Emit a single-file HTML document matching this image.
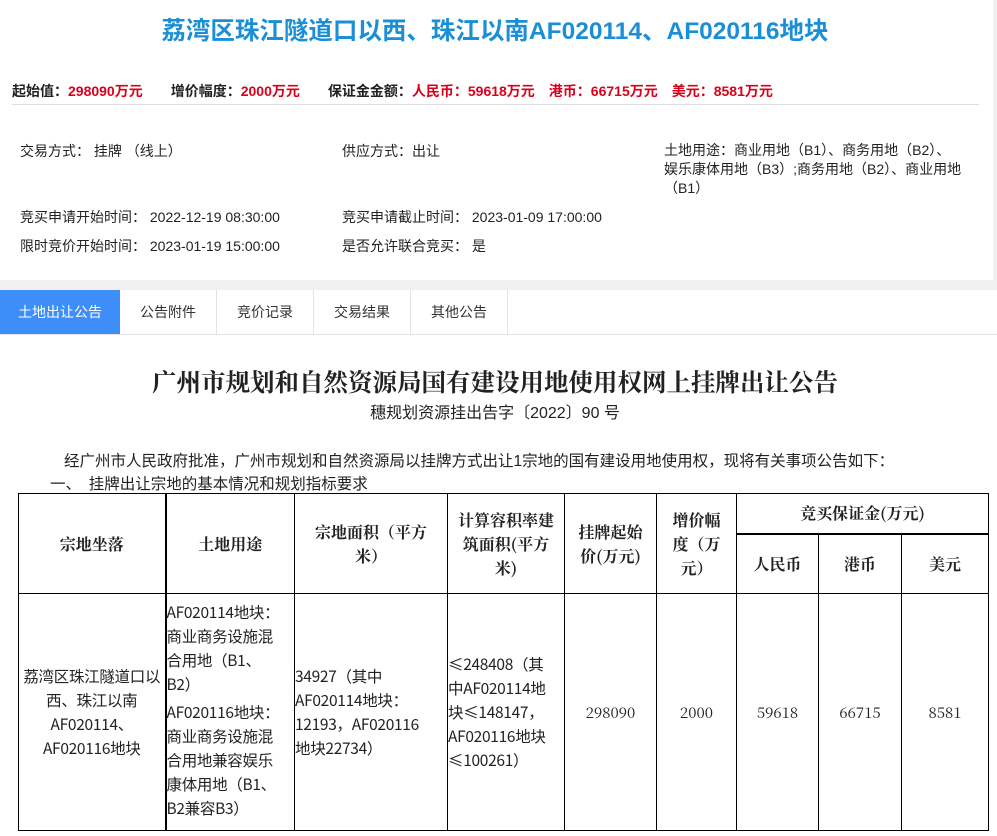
<!DOCTYPE html>
<html><head><meta charset="utf-8"><style>
*{margin:0;padding:0;box-sizing:border-box}
body{width:997px;height:836px;overflow:hidden;background:#fff;font-family:"Liberation Sans","Noto Sans CJK SC",sans-serif;color:#222;position:relative}
.a{position:absolute;white-space:nowrap}
h1{position:absolute;left:0;width:990px;top:12px;text-align:center;font-size:24.5px;color:#1a8fd6;font-weight:bold}
.red{color:#d9001b}
.b{font-weight:bold;font-size:14px}
.s{font-size:14px;color:#222}
.tab{position:absolute;top:290px;height:44px;line-height:44px;text-align:center;font-size:14px;border-right:1px solid #e4e4e8;color:#333}
table{position:absolute;left:18px;top:493px;border-collapse:collapse;font-family:"Noto Serif CJK SC","Noto Sans CJK SC",serif}
td{border:1px solid #000;text-align:center;font-size:15px;vertical-align:middle}
th{border:1px solid #000;font-size:16px;font-weight:bold;text-align:center;line-height:24px}
.l{text-align:left;font-size:15.5px;line-height:24px;font-family:"Noto Sans CJK SC",sans-serif;letter-spacing:-0.3px}
</style></head><body>
<h1>荔湾区珠江隧道口以西、珠江以南AF020114、AF020116地块</h1>
<div class="a b" style="left:12px;top:81px">起始值：<span class="red">298090万元</span>　　增价幅度：<span class="red">2000万元</span>　　保证金金额：<span class="red">人民币：59618万元　港币：66715万元　美元：8581万元</span></div>
<div class="a" style="left:12px;top:104px;width:967px;height:1px;background:#ddd"></div>
<div class="a s" style="left:20px;top:141px">交易方式：&nbsp;挂牌 （线上）</div>
<div class="a s" style="left:342px;top:141px">供应方式：出让</div>
<div class="a s" style="left:664px;top:141px;line-height:19px">土地用途：商业用地（B1）、商务用地（B2）、<br>娱乐康体用地（B3）;商务用地（B2）、商业用地<br>（B1）</div>
<div class="a s" style="left:20px;top:207px">竞买申请开始时间：&nbsp;2022-12-19 08:30:00</div>
<div class="a s" style="left:342px;top:207px">竞买申请截止时间：&nbsp;2023-01-09 17:00:00</div>
<div class="a s" style="left:20px;top:236px">限时竞价开始时间：&nbsp;2023-01-19 15:00:00</div>
<div class="a s" style="left:342px;top:236px">是否允许联合竞买：&nbsp;是</div>
<div class="a" style="left:0;top:280px;width:997px;height:10px;background:#f0f0f0"></div>
<div class="a" style="left:993px;top:0;width:4px;height:290px;background:#f0f0f0"></div>
<div class="a" style="left:0;top:334px;width:997px;height:1px;background:#e4e4e8"></div>
<div class="tab" style="left:0;width:120px;background:#3d8ef8;color:#fff;border:none">土地出让公告</div>
<div class="tab" style="left:120px;width:97px">公告附件</div>
<div class="tab" style="left:217px;width:97px">竞价记录</div>
<div class="tab" style="left:314px;width:97px">交易结果</div>
<div class="tab" style="left:411px;width:97px">其他公告</div>
<div class="a" style="left:0;width:990px;top:364px;text-align:center;font-size:24.5px;font-weight:bold;font-family:'Noto Serif CJK SC',serif">广州市规划和自然资源局国有建设用地使用权网上挂牌出让公告</div>
<div class="a" style="left:0;width:990px;top:399px;text-align:center;font-size:16px">穗规划资源挂出告字〔2022〕90 号</div>
<div class="a" style="left:64px;top:449px;font-size:15.5px">经广州市人民政府批准，广州市规划和自然资源局以挂牌方式出让1宗地的国有建设用地使用权，现将有关事项公告如下：</div>
<div class="a" style="left:50px;top:472px;font-size:15.5px">一、　挂牌出让宗地的基本情况和规划指标要求</div>
<table>
<tr style="height:40px"><th rowspan="2" style="width:147px;border-right:2px solid #000">宗地坐落</th><th rowspan="2" style="width:129px">土地用途</th><th rowspan="2" style="width:153px">宗地面积（平方<br>米）</th><th rowspan="2" style="width:117px">计算容积率建<br>筑面积(平方<br>米)</th><th rowspan="2" style="width:92px">挂牌起始<br>价(万元)</th><th rowspan="2" style="width:80px">增价幅<br>度（万<br>元）</th><th colspan="3" style="border-bottom:2px solid #000">竞买保证金(万元)</th></tr>
<tr style="height:60px"><th style="width:82px">人民币</th><th style="width:83px">港币</th><th style="width:87px">美元</th></tr>
<tr style="height:237px"><td class="l" style="text-align:center;border-right:2px solid #000">荔湾区珠江隧道口以<br>西、珠江以南<br>AF020114、<br>AF020116地块</td>
<td class="l" style="vertical-align:top;padding-top:6px">AF020114地块：<br>商业商务设施混<br>合用地（B1、<br>B2）<div style="height:4px"></div>AF020116地块：<br>商业商务设施混<br>合用地兼容娱乐<br>康体用地（B1、<br>B2兼容B3）</td>
<td class="l">34927（其中<br>AF020114地块：<br>12193，AF020116<br>地块22734）</td>
<td class="l">≤248408（其<br>中AF020114地<br>块≤148147，<br>AF020116地块<br>≤100261）</td>
<td>298090</td><td>2000</td><td>59618</td><td>66715</td><td>8581</td></tr>
</table>
</body></html>
